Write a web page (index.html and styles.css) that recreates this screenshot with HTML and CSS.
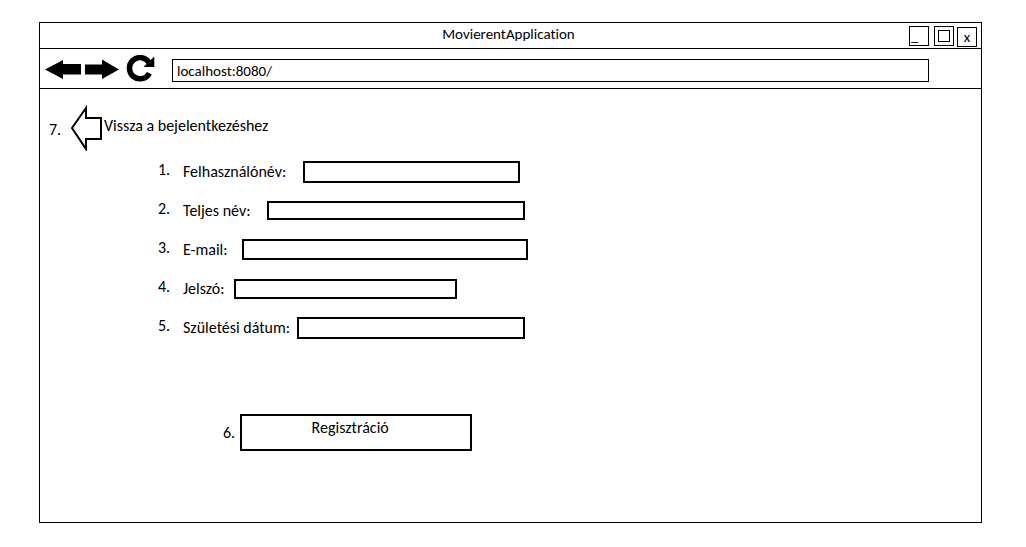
FILE: index.html
```html
<!DOCTYPE html>
<html lang="hu">
<head>
<meta charset="utf-8">
<title>MovierentApplication</title>
<link rel="stylesheet" href="styles.css">
</head>
<body>
<div class="window">
  <header class="titlebar">
    <h1 class="title">MovierentApplication</h1>
    <div class="controls">
      <button class="control minimize" type="button">_</button>
      <button class="control" type="button" aria-label="Teljes méret"><span class="square"></span></button>
      <button class="control close" type="button">x</button>
    </div>
  </header>
  <nav class="toolbar">
    <button class="icon" type="button" aria-label="Vissza"><svg width="36" height="20" viewBox="0 0 36 20"><path d="M0 10.500 18 1V5H36V15.500H18V20Z"/></svg></button>
    <button class="icon forward" type="button" aria-label="Előre"><svg width="34" height="20" viewBox="0 0 34 20"><path d="M34 10.500 17 0.500V5.500H0V15.500H17V20Z"/></svg></button>
    <button class="icon reload" type="button" aria-label="Frissítés"><svg width="29" height="27" viewBox="0 0 29 27"><path d="M23.400 18.200A10.600 10.600 0 1 1 23.200 7.900" fill="none" stroke="#000" stroke-width="5.500"/><path d="M28.300 1.500V12H17.500Z"/></svg></button>
    <input class="address" type="text" value="localhost:8080/" aria-label="Cím">
  </nav>
  <main class="page">
    <div class="back">
      <span class="back-number">7.</span>
      <a class="back-link" href="#">
        <svg width="34" height="46" viewBox="0 0 34 46"><path d="M2 23 16 3V13H31V34H16V44Z" fill="#fff" stroke="#000" stroke-width="2"/></svg>
        <span class="back-text">Vissza a bejelentkezéshez</span>
      </a>
    </div>
    <form class="form">
      <div class="row"><span class="number">1.</span><label class="label label-user" for="user">Felhasználónév:</label><input class="field field-user" id="user" type="text"></div>
      <div class="row"><span class="number">2.</span><label class="label label-name" for="name">Teljes név:</label><input class="field field-name" id="name" type="text"></div>
      <div class="row"><span class="number">3.</span><label class="label label-email" for="email">E-mail:</label><input class="field field-email" id="email" type="email"></div>
      <div class="row"><span class="number">4.</span><label class="label label-password" for="password">Jelszó:</label><input class="field field-password" id="password" type="password"></div>
      <div class="row"><span class="number">5.</span><label class="label label-birth" for="birth">Születési dátum:</label><input class="field field-birth" id="birth" type="text"></div>
      <div class="submit-row"><span>6.</span><button class="submit" type="submit">Regisztráció</button></div>
    </form>
  </main>
</div>
</body>
</html>
```
FILE: styles.css
```css
* {
  box-sizing: border-box;
}

body {
  margin: 0;
  padding: 22px 44px 24px 39px;
  min-height: 100vh;
  display: flex;
  background: #fff;
  color: #000;
  font: 16px/20px Carlito, Lato, sans-serif;
  font-variant-ligatures: none;
}

button,
input {
  margin: 0;
  padding: 0;
  border: 0;
  border-radius: 0;
  background: #fff;
  color: inherit;
  font: inherit;
}

svg {
  display: block;
}

.window {
  flex: 1;
  display: flex;
  flex-direction: column;
  border: 1px solid #000;
}

.titlebar {
  display: grid;
  grid-template-columns: 1fr auto 1fr;
  height: 26px;
  border-bottom: 1px solid #000;
}

.title {
  grid-column: 2;
  margin: 0;
  padding: 1px 4px 0 0;
  font-size: 15px;
  font-weight: 400;
}

.controls {
  display: flex;
  justify-content: flex-end;
  gap: 3px;
  padding: 3px 4px 0 0;
}

.control {
  display: flex;
  align-items: center;
  justify-content: center;
  width: 20px;
  height: 20px;
  border: 1px solid #000;
  font-size: 15px;
}

.minimize {
  justify-content: flex-start;
  margin-right: 2px;
  padding-left: 1px;
}

.close {
  margin-top: 1px;
}

.square {
  width: 12px;
  height: 12px;
  border: 1px solid #000;
}

.toolbar {
  display: flex;
  align-items: center;
  height: 40px;
  padding: 0 52px 0 5px;
  border-bottom: 1px solid #000;
}

.forward {
  margin-left: 4px;
}

.reload {
  margin-left: 7px;
}

.address {
  flex: 1;
  min-width: 0;
  height: 23px;
  margin: 3px 0 0 17px;
  padding: 2px 4px 0;
  border: 1px solid #000;
  font-size: 15px;
}

.page {
  padding: 16px 8px 32px;
}

.back {
  display: flex;
  align-items: center;
}

.back-number {
  width: 22px;
  padding: 3px 0 0 1px;
}

.back-link {
  display: flex;
  align-items: center;
  color: inherit;
  text-decoration: none;
}

.back-text {
  padding-bottom: 5px;
}

.form {
  padding: 1px 0 0 110px;
}

.row {
  display: flex;
  align-items: center;
  height: 39px;
}

.number {
  width: 25px;
  padding-bottom: 3px;
}

.label-user {
  width: 120px;
}

.label-name {
  width: 84px;
}

.label-email {
  width: 59px;
}

.label-password {
  width: 51px;
}

.label-birth {
  width: 114px;
}

.field {
  height: 21px;
  padding: 0 4px;
  border: 2px solid #000;
}

.field-user {
  width: 217px;
  height: 22px;
}

.field-name {
  width: 258px;
  height: 19px;
}

.field-email {
  width: 286px;
}

.field-password {
  width: 223px;
  height: 20px;
}

.field-birth {
  width: 228px;
  height: 22px;
}

.submit-row {
  display: flex;
  align-items: center;
  gap: 5px;
  margin-top: 67px;
  padding-left: 65px;
}

.submit {
  width: 232px;
  height: 37px;
  padding: 0 12px 9px 0;
  border: 2px solid #000;
}
```
